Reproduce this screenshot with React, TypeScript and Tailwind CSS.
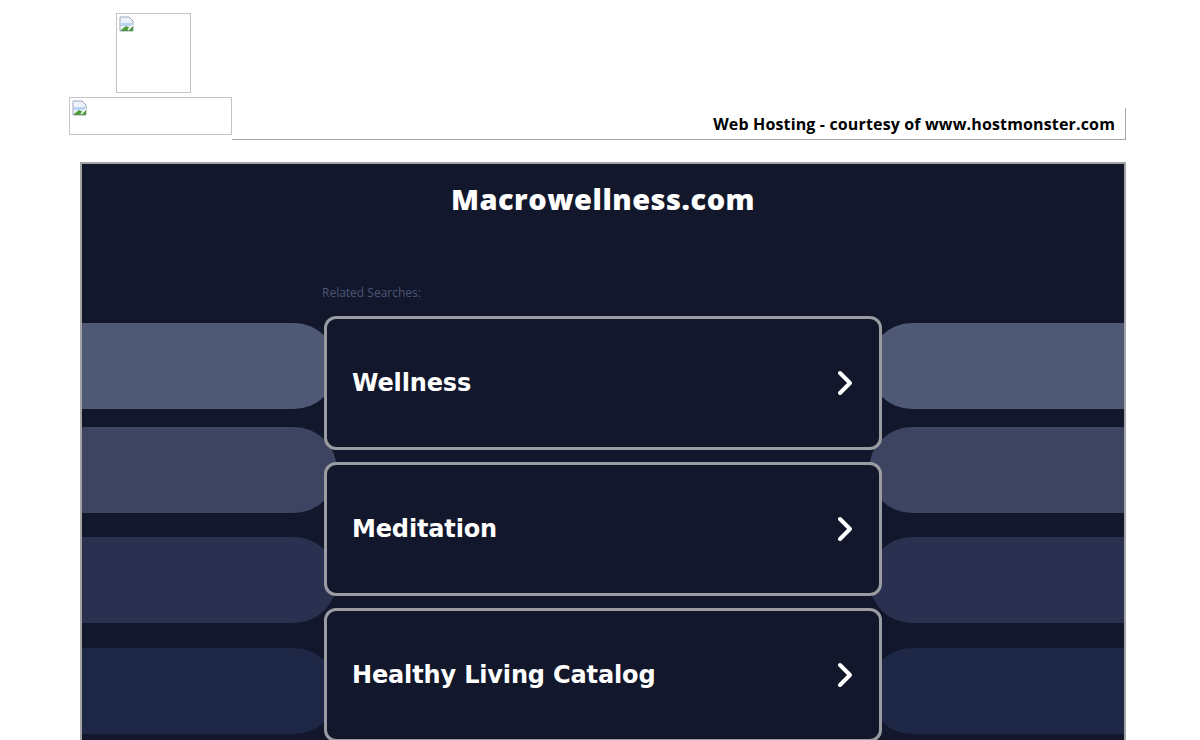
import React from "react";

const searches = ["Wellness", "Meditation", "Healthy Living Catalog"];

const bars = [
  { color: "bg-[#4f5874]", gap: "mt-[7px]" },
  { color: "bg-[#3c4461]", gap: "mt-[18px]" },
  { color: "bg-[#2a3150]", gap: "mt-[24px]" },
  { color: "bg-[#1f2747]", gap: "mt-[25px]" },
];

function BrokenImage({ className }: { className: string }) {
  return (
    <div className={`border border-[#c4c4c4] bg-white ${className}`}>
      <svg width="16" height="16" viewBox="0 0 16 16" className="ml-[2px] mt-[2px]">
        <path d="M1 1h9l4 4v10H1z" fill="#eef3fb" stroke="#9aa7b8" strokeWidth="1" />
        <path d="M2 7h11v3H2z" fill="#b9d3f2" />
        <path d="M2 14l5-4 4 2 3-3v6H2z" fill="#4f9a3c" />
        <path d="M9 14l5-5" stroke="#ffffff" strokeWidth="1.5" />
      </svg>
    </div>
  );
}

function Chevron() {
  return (
    <svg width="22" height="28" viewBox="0 0 22 28" fill="none">
      <polyline
        points="5,4 15,14 5,24"
        stroke="#ffffff"
        strokeWidth="4"
        strokeLinecap="round"
        strokeLinejoin="round"
      />
    </svg>
  );
}

export default function App() {
  return (
    <div className="w-[1200px] h-[740px] overflow-hidden bg-white font-['Open_Sans',sans-serif]">
      {/* Kopf */}
      <BrokenImage className="ml-[116px] mt-[13px] w-[75px] h-[80px]" />
      <div className="flex">
        <BrokenImage className="ml-[69px] mt-[4px] w-[163px] h-[38px]" />
        <div className="mt-[15px] w-[894px] h-[32px] border-r border-b border-[#a5a5a5] flex items-center justify-end pr-[10px]">
          <span className="text-[16px] font-bold text-black leading-none tracking-[0.15px]">
            Web Hosting - courtesy of www.hostmonster.com
          </span>
        </div>
      </div>

      {/* Panel */}
      <div className="ml-[80px] mt-[22px] w-[1046px] h-[600px] border-2 border-b-0 border-[#a3a3a3] bg-[#12172b]">
        <h1 className="pt-[17px] text-center text-[29px] font-extrabold text-white leading-[36px] tracking-[0.5px] font-['Open_Sans',sans-serif]">
          Macrowellness.com
        </h1>
        <p className="ml-[240px] mt-[68px] text-[12px] text-[#4a5577] leading-[16px] font-['Open_Sans',sans-serif]">
          Related Searches:
        </p>
        <div className="flex mt-[15px]">
          <div className="w-[255px] flex flex-col">
            {bars.map((b, i) => (
              <div key={i} className={`${b.gap} h-[86px] rounded-r-[43px] ${b.color}`} />
            ))}
          </div>
          <div className="relative z-10 -ml-[13px] w-[558px] flex flex-col gap-[12px]">
            {searches.map((s) => (
              <div
                key={s}
                className="h-[134px] border-[3px] border-[#9b9ca2] rounded-[12px] bg-[#12172b] flex items-center justify-between pl-[25px] pr-[22px]"
              >
                <span className="text-[24px] font-bold text-white tracking-[-0.15px] font-['DejaVu_Sans',sans-serif]">
                  {s}
                </span>
                <Chevron />
              </div>
            ))}
          </div>
          <div className="-ml-[13px] flex-1 flex flex-col">
            {bars.map((b, i) => (
              <div key={i} className={`${b.gap} h-[86px] rounded-l-[43px] ${b.color}`} />
            ))}
          </div>
        </div>
      </div>
    </div>
  );
}
